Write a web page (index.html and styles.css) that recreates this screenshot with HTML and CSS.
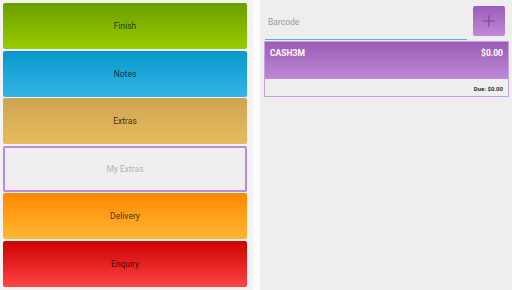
FILE: index.html
```html
<!DOCTYPE html>
<html lang="en">
<head>
    <meta charset="UTF-8">
    <meta name="viewport" content="width=device-width, initial-scale=1.0">
    <title>POS</title>
    <link rel="stylesheet" href="styles.css">
</head>
<body>
    <div class="screen">
        <div class="actions">
            <button class="action finish">Finish</button>
            <button class="action notes">Notes</button>
            <button class="action extras">Extras</button>
            <button class="action my-extras">My Extras</button>
            <button class="action delivery">Delivery</button>
            <button class="action enquiry">Enquiry</button>
        </div>
        <div class="divider"></div>
        <div class="order">
            <div class="scan">
                <input class="barcode" type="text" placeholder="Barcode">
                <button class="add">
                    <svg width="14" height="14" viewBox="0 0 14 14"><path d="M7 1v12M1 7h12" stroke="#6a4a7e" stroke-width="1" fill="none"/></svg>
                </button>
            </div>
            <div class="ticket">
                <div class="ticket-head">
                    <span>CASH3M</span>
                    <span>$0.00</span>
                </div>
                <div class="ticket-foot">Due: $0.00</div>
            </div>
        </div>
    </div>
</body>
</html>
```

FILE: styles.css
```css
body {
    margin: 0;
    font-family: Roboto, "Liberation Sans", sans-serif;
    background: #eeeeee;
}
.screen {
    display: flex;
    height: 290px;
}
.actions {
    width: 244px;
    padding: 3px 5px 0 3px;
    background: #f3f3f3;
    display: flex;
    flex-direction: column;
    gap: 1.5px;
}
.action {
    height: 46px;
    border: none;
    border-radius: 2px;
    font-family: inherit;
    font-size: 8.5px;
    font-weight: 400;
    color: rgba(0, 0, 0, 0.75);
    padding: 0;
}
.finish {
    background: linear-gradient(#6a9e00, #99cc00);
}
.notes {
    background: linear-gradient(#0898cc, #33b5e5);
}
.extras {
    background: linear-gradient(#cfa452, #e7bb5e);
}
.my-extras {
    background: #efefef;
    border: 2px solid #b98ade;
    color: #b3b3b3;
}
.delivery {
    background: linear-gradient(#ff8800, #ffb733);
}
.enquiry {
    background: linear-gradient(#cc0000, #ff4444);
}
.divider {
    width: 8px;
    background: linear-gradient(90deg, #f3f3f3, #ffffff 40%, #fafafa);
}
.order {
    flex: 1;
    background: #eeeeee;
    padding: 6px 3px 0 4px;
}
.scan {
    display: flex;
    align-items: flex-start;
    gap: 6px;
    margin-right: 4px;
}
.barcode {
    flex: 1;
    height: 30px;
    margin: 1px 0 0 1px;
    padding: 0 3px 2px 3px;
    border: none;
    border-bottom: 1px solid #5aaed3;
    background: transparent;
    font-family: inherit;
    font-size: 8.5px;
    outline: none;
}
.barcode::placeholder {
    color: #9a9a9a;
}
.add {
    width: 32px;
    height: 30px;
    border: none;
    border-radius: 2px;
    background: linear-gradient(#9c5db8, #c08ad8);
    display: flex;
    align-items: center;
    justify-content: center;
    padding: 0;
}
.ticket {
    margin-top: 1px;
    border: 1px solid #c9a0de;
}
.ticket-head {
    height: 37px;
    padding: 6px 5px 0 5px;
    box-sizing: border-box;
    display: flex;
    justify-content: space-between;
    background: linear-gradient(#9b5cb6, #bd89d6);
    color: #ffffff;
    font-weight: bold;
    font-size: 8.5px;
}
.ticket-foot {
    height: 17px;
    line-height: 19px;
    padding-right: 5px;
    text-align: right;
    font-size: 6px;
    font-weight: bold;
    color: #333333;
    background: #efefef;
}
```
